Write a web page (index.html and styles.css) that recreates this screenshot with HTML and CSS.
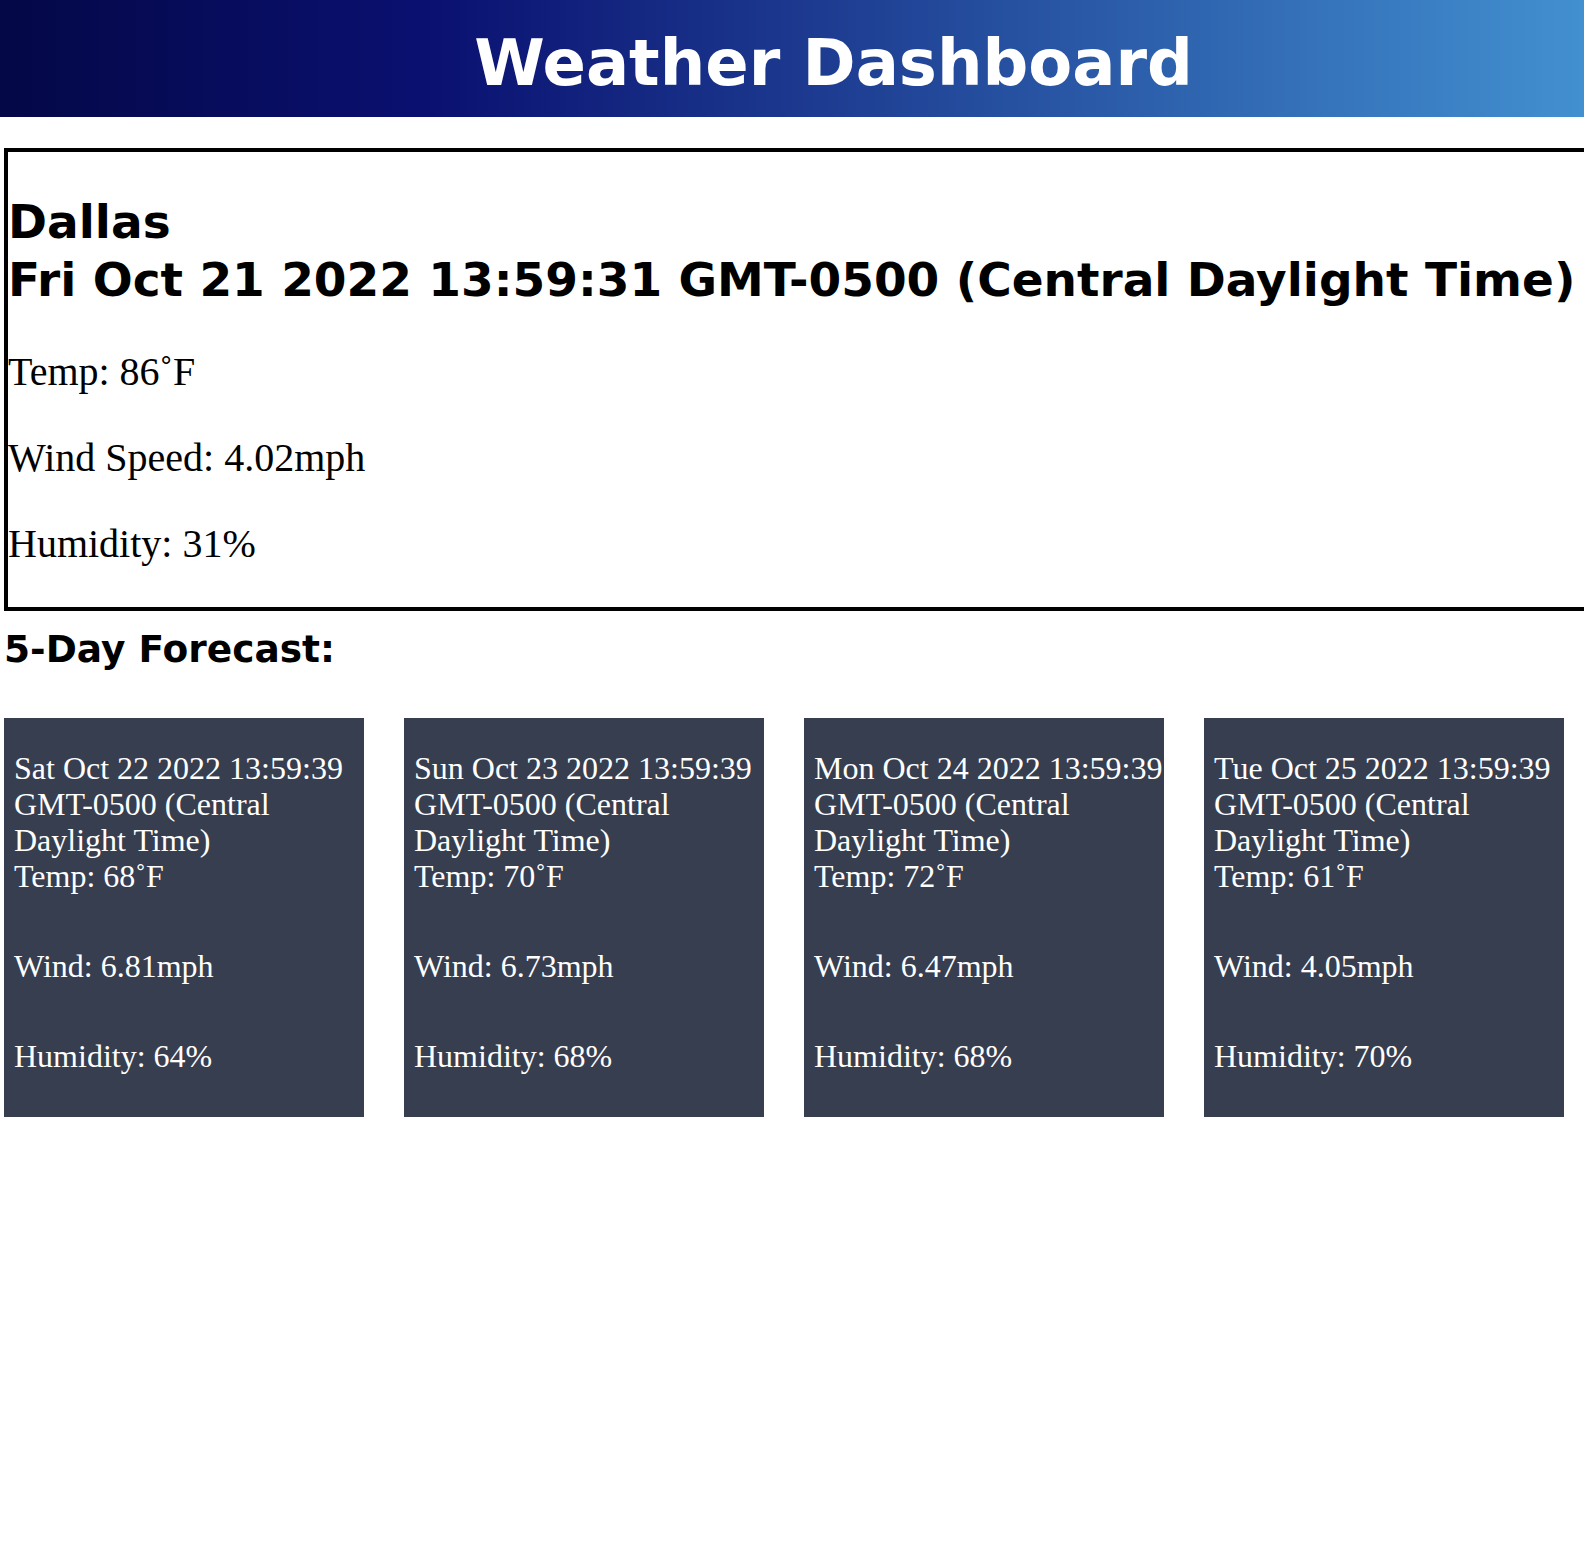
FILE: index.html
```html
<!DOCTYPE html>
<html lang="en">
<head>
<meta charset="utf-8">
<title>Weather Dashboard</title>
<link rel="stylesheet" href="styles.css">
</head>
<body>
<header class="site-header">
  <h1 class="site-title">Weather Dashboard</h1>
</header>
<main class="content">
  <section class="current">
    <h2 class="current-title">Dallas<br>Fri Oct 21 2022 13:59:31 GMT-0500 (Central Daylight Time)</h2>
    <p class="current-stat">Temp: 86˚F</p>
    <p class="current-stat">Wind Speed: 4.02mph</p>
    <p class="current-stat">Humidity: 31%</p>
  </section>
  <h3 class="forecast-title">5-Day Forecast:</h3>
  <div class="forecast">
    <div class="day-card">
      <p class="day-head">Sat Oct 22 2022 13:59:39 GMT-0500 (Central Daylight Time)<br>Temp: 68˚F</p>
      <p class="day-stat">Wind: 6.81mph</p>
      <p class="day-stat">Humidity: 64%</p>
    </div>
    <div class="day-card">
      <p class="day-head">Sun Oct 23 2022 13:59:39 GMT-0500 (Central Daylight Time)<br>Temp: 70˚F</p>
      <p class="day-stat">Wind: 6.73mph</p>
      <p class="day-stat">Humidity: 68%</p>
    </div>
    <div class="day-card">
      <p class="day-head">Mon Oct 24 2022 13:59:39 GMT-0500 (Central Daylight Time)<br>Temp: 72˚F</p>
      <p class="day-stat">Wind: 6.47mph</p>
      <p class="day-stat">Humidity: 68%</p>
    </div>
    <div class="day-card">
      <p class="day-head">Tue Oct 25 2022 13:59:39 GMT-0500 (Central Daylight Time)<br>Temp: 61˚F</p>
      <p class="day-stat">Wind: 4.05mph</p>
      <p class="day-stat">Humidity: 70%</p>
    </div>
  </div>
</main>
</body>
</html>
```
FILE: styles.css
```css
html, body {
  margin: 0;
  padding: 0;
}
body {
  overflow-x: hidden;
  background: #ffffff;
  color: #000000;
  font-family: "Liberation Serif", "Times New Roman", serif;
}
.site-header {
  background: linear-gradient(to right, #040847 0%, #0a1070 27%, #4290d0 100%);
  padding: 26px 0 16px 83px;
}
.site-title {
  margin: 0;
  text-align: center;
  color: #ffffff;
  font-family: Verdana, "DejaVu Sans", sans-serif;
  font-weight: bold;
  font-size: 64px;
  line-height: 75px;
}
.content {
  padding: 31px 0 0 4px;
}
.current {
  border: 4px solid #000000;
  width: calc(100vw + 40px);
  box-sizing: border-box;
}
.current-title {
  margin: 41px 0 0;
  font-family: Verdana, "DejaVu Sans", sans-serif;
  font-weight: bold;
  font-size: 47px;
  line-height: 58px;
  white-space: nowrap;
}
.current-stat {
  margin: 40px 0;
  font-size: 40px;
  line-height: 46px;
}
.forecast-title {
  margin: 17px 0 47px;
  font-family: Verdana, "DejaVu Sans", sans-serif;
  font-weight: bold;
  font-size: 37.5px;
  line-height: 43px;
}
.forecast {
  display: flex;
  gap: 40px;
}
.day-card {
  width: 360px;
  flex: none;
  box-sizing: border-box;
  background: #363e50;
  color: #ffffff;
  padding: 32px 0 43px 10px;
  font-size: 32px;
  line-height: 36px;
}
.day-head {
  margin: 0;
}
.day-stat {
  margin: 54px 0 0;
}
```
